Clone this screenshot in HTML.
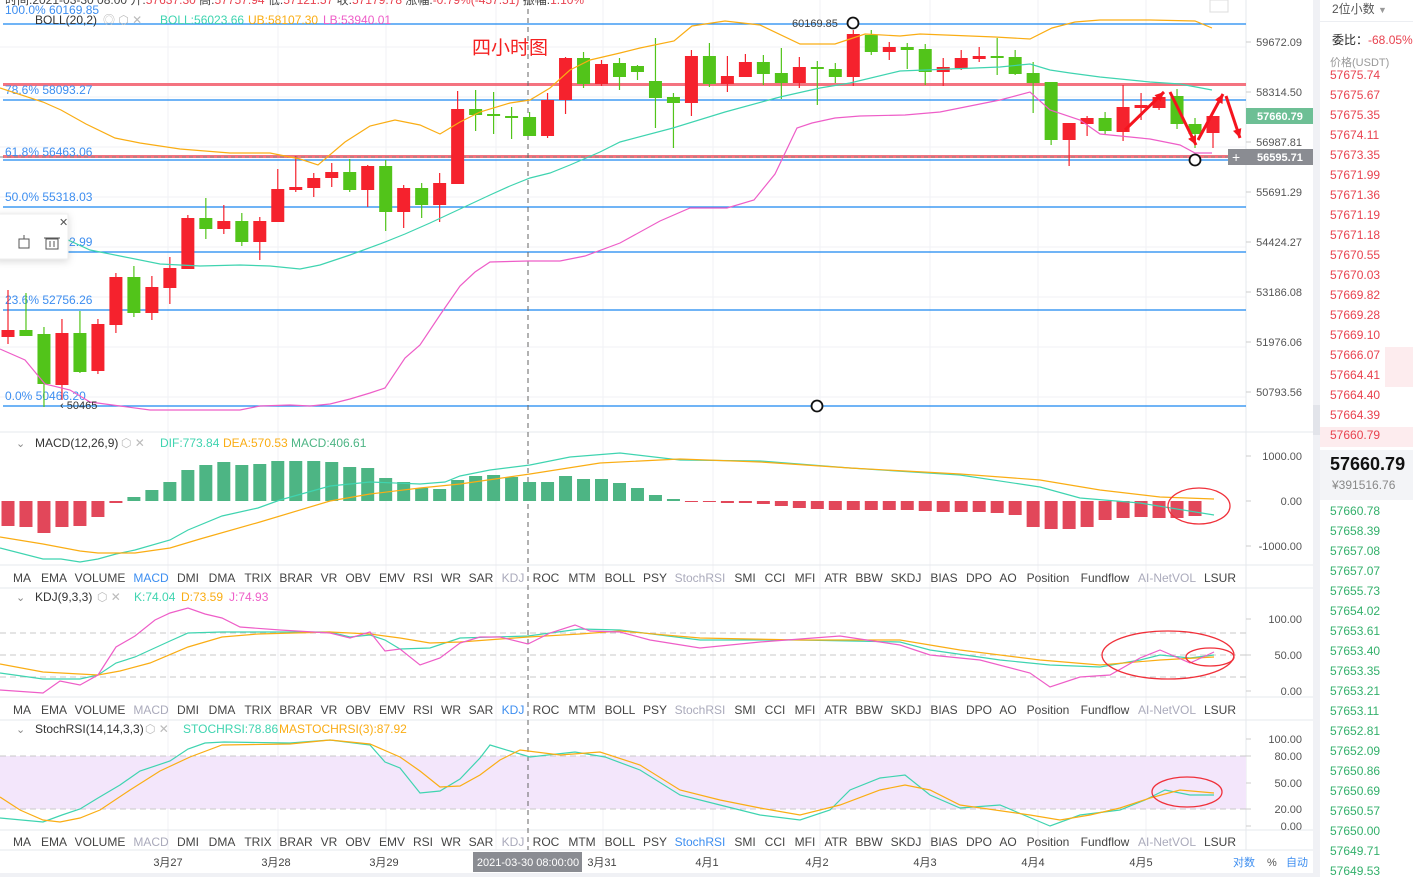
<!DOCTYPE html>
<html><head><meta charset="utf-8">
<style>
*{margin:0;padding:0;box-sizing:border-box}
body{width:1413px;height:877px;overflow:hidden;background:#fff;font-family:"Liberation Sans","Noto Sans CJK SC",sans-serif;position:relative}
#rp{position:absolute;left:1320px;top:0;width:93px;height:877px;background:#fff;font-size:12px}
#rp .r{position:absolute;left:10px;color:#e8424f}
#rp .g{position:absolute;left:10px;color:#33b06b}
#sb{position:absolute;left:1313px;top:0;width:7px;height:877px;background:#f0f1f5}
</style></head><body>
<svg id="c" width="1313" height="877" style="position:absolute;left:0;top:0" font-family="Liberation Sans, Noto Sans CJK SC, sans-serif"></svg>
<div id="sb"><div style="position:absolute;top:405px;left:0;width:7px;height:30px;background:#e2e4ea"></div></div>
<div id="rp">
<div style="position:absolute;left:12px;top:0;color:#555;font-size:12px">2位小数 <span style="color:#999;font-size:9px">▼</span></div>
<div style="position:absolute;left:0;top:21px;width:93px;height:1px;background:#eceef2"></div>
<div style="position:absolute;left:12px;top:31px;font-size:12px;color:#222">委比：<span style="color:#e8424f">-68.05%</span></div>
<div style="position:absolute;left:10px;top:54px;font-size:11px;color:#999">价格(USDT)</div>
<div id="rl"></div>
<div style="position:absolute;left:0;top:450px;width:93px;height:50px;background:#f3f4f7"></div>
<div style="position:absolute;left:10px;top:454px;font-size:18px;font-weight:bold;color:#111">57660.79</div>
<div style="position:absolute;left:12px;top:478px;font-size:12px;color:#888">¥391516.76</div>
</div>
<script>
const S=document.getElementById('c');let h='';
const W=1246;
[47,97,147,197,247,297,347,397].forEach(y=>h+=`<line x1="0" y1="${y}" x2="${W}" y2="${y}" stroke="#f0f2f5"/>`);
[168,278,386,496,603,713,820,930,1038,1146].forEach(x=>h+=`<line x1="${x}" y1="0" x2="${x}" y2="850" stroke="#f0f2f5"/>`);
[432,565,588,697,720,830,850].forEach(y=>h+=`<line x1="0" y1="${y}" x2="1313" y2="${y}" stroke="#e6e8ec"/>`);
h+=`<line x1="1246" y1="0" x2="1246" y2="850" stroke="#e6e8ec"/>`;
h+=`<rect x="0" y="756" width="${W}" height="53" fill="#f3e6fb"/>`;
[633,655,677,756,809].forEach(y=>h+=`<line x1="0" y1="${y}" x2="${W}" y2="${y}" stroke="#c8c8c8" stroke-dasharray="6,4"/>`);
[24,100,160,207,252,310,406].forEach(y=>h+=`<line x1="3" y1="${y}" x2="${W}" y2="${y}" stroke="#1a88f0" stroke-width="1.2"/>`);
[85,157].forEach(y=>h+=`<rect x="3" y="${y-2}" width="${W-3}" height="3" fill="#f25a6a" opacity=".85"/>`);
h+=`<line x1="0" y1="157" x2="${W}" y2="157" stroke="#888" stroke-dasharray="4,3"/>`;
h+=`<line x1="528" y1="0" x2="528" y2="850" stroke="#666" stroke-dasharray="5,4"/>`;
const fl=[[14,'100.0% 60169.85'],[94,'78.6% 58093.27'],[156,'61.8% 56463.06'],[201,'50.0% 55318.03'],[246,'38.2% 53902.99'],[304,'23.6% 52756.26'],[400,'0.0% 50466.20']];
fl.forEach(f=>h+=`<text x="5" y="${f[0]}" font-size="12" fill="#3d8ef0">${f[1]}</text>`);
const C=[[330,337,290,344,'r'],[330,336,293,336,'g'],[334,384,327,407,'g'],[333,385,319,400,'r'],[333,372,311,373,'g'],[324,371,319,374,'r'],[277,325,273,333,'r'],[277,313,266,317,'g'],[287,313,276,320,'r'],[268,288,257,304,'r'],[218,269,215,269,'r'],[218,229,198,239,'g'],[221,229,205,234,'r'],[221,242,213,246,'g'],[221,242,217,260,'r'],[189,222,169,222,'r'],[187,190,156,192,'r'],[178,188,173,197,'r'],[172,178,163,187,'r'],[172,190,159,192,'g'],[166,190,165,207,'r'],[166,212,160,231,'g'],[188,212,185,228,'r'],[188,205,183,218,'g'],[183,205,173,222,'r'],[109,184,91,184,'r'],[109,115,90,131,'g'],[114,116,92,134,'g'],[116,118,107,139,'g'],[117,136,112,136,'g'],[100,136,93,138,'r'],[58,100,57,114,'r'],[58,84,52,88,'g'],[64,84,60,86,'r'],[63,77,58,90,'g'],[66,72,65,80,'g'],[81,98,38,128,'g'],[97,103,93,148,'g'],[56,103,50,116,'r'],[56,84,43,87,'g'],[76,84,56,92,'r'],[62,77,54,77,'r'],[62,74,55,85,'g'],[73,83,48,99,'g'],[67,83,57,88,'r'],[67,69,61,105,'g'],[69,77,63,83,'g'],[34,77,30,86,'r'],[35,52,30,55,'g'],[47,52,42,60,'r'],[47,50,43,69,'g'],[49,72,44,85,'g'],[67,72,58,86,'r'],[58,68,50,70,'r'],[56,59,47,62,'r'],[56,57,38,75,'g'],[57,74,50,75,'g'],[73,83,62,113,'g'],[82,140,82,145,'g'],[123,140,123,166,'r'],[118,124,116,136,'r'],[118,131,112,134,'g'],[107,132,85,141,'r'],[105,108,93,120,'r'],[97,108,94,110,'r'],[96,124,89,129,'g'],[124,134,118,148,'g'],[116,133,116,148,'r']];
const SP=(1213-8)/(C.length-1);
const X=i=>8+i*SP;
C.forEach((c,i)=>{const x=X(i),col=c[4]=='r'?'#f5222d':'#52c41a';
h+=`<line x1="${x}" y1="${c[2]}" x2="${x}" y2="${c[3]}" stroke="${col}" stroke-width="1.2"/><rect x="${x-6.5}" y="${c[0]}" width="13" height="${Math.max(2,c[1]-c[0])}" fill="${col}"/>`});
const pl=(p,col,w)=>h+=`<polyline fill="none" stroke="${col}" stroke-width="${w||1.2}" points="${p.map(q=>q.join(',')).join(' ')}"/>`;
pl([[0,88],[43,102],[61,110],[86,124],[115,138],[140,143],[180,149],[230,153],[270,153],[300,159],[318,165],[345,142],[370,126],[395,120],[420,125],[440,134],[460,122],[480,112],[510,103],[530,100],[550,88],[570,70],[590,60],[620,53],[640,48],[674,41],[692,26],[725,21],[760,25],[800,44],[835,44],[865,34],[900,36],[920,34],[995,37],[1030,39],[1052,28],[1075,22],[1100,20],[1150,20],[1195,21],[1212,28]],'#faad14');
pl([[0,245],[68,240],[90,250],[120,256],[160,264],[200,266],[240,265],[270,266],[300,269],[320,265],[350,255],[380,244],[405,234],[430,223],[460,209],[490,195],[510,186],[530,178],[550,173],[570,165],[600,152],[620,142],[673,128],[725,112],[780,97],[820,88],[850,83],[900,71],[950,69],[1000,67],[1030,64],[1050,70],[1070,73],[1100,77],[1150,82],[1180,84],[1212,90]],'#3fd4b0');
pl([[0,349],[25,360],[45,384],[70,390],[90,402],[120,406],[150,410],[240,410],[260,406],[290,405],[310,406],[330,404],[350,399],[370,393],[385,388],[405,358],[420,345],[440,315],[460,286],[475,272],[490,262],[528,261],[560,261],[585,256],[620,243],[660,221],[690,208],[727,208],[754,200],[775,174],[797,128],[812,123],[835,118],[860,116],[905,115],[940,112],[970,106],[1000,100],[1030,92],[1050,110],[1080,120],[1100,134],[1150,139],[1180,145],[1195,153],[1212,153]],'#ee5ec8');
const ar=(x1,y1,x2,y2)=>{h+=`<line x1="${x1}" y1="${y1}" x2="${x2}" y2="${y2}" stroke="#f5141e" stroke-width="3"/>`;const a=Math.atan2(y2-y1,x2-x1),L=10;
h+=`<polygon fill="#f5141e" points="${x2},${y2} ${x2-L*Math.cos(a-0.45)},${y2-L*Math.sin(a-0.45)} ${x2-L*Math.cos(a+0.45)},${y2-L*Math.sin(a+0.45)}"/>`};
ar(1125,130,1164,92);ar(1170,92,1196,145);ar(1198,140,1223,94);ar(1226,96,1240,138);
[[853,23],[1195,160],[817,406]].forEach(p=>h+=`<circle cx="${p[0]}" cy="${p[1]}" r="5.5" fill="#fff" stroke="#111" stroke-width="1.8"/>`);
h+=`<text x="792" y="27" font-size="11" fill="#444">60169.85</text>`;
h+=`<text x="60" y="409" font-size="11" fill="#333">‹  50465</text>`;
h+=`<text x="472" y="54" font-size="19" fill="#f52020">四小时图</text>`;
h+=`<text x="5" y="4" font-size="12" fill="#444">时间:2021-03-30 08:00 开:<tspan fill="#e8424f">57637.30</tspan> 高:<tspan fill="#e8424f">57757.94</tspan> 低:<tspan fill="#e8424f">57121.57</tspan> 收:<tspan fill="#e8424f">57179.78</tspan> 涨幅:<tspan fill="#e8424f">-0.79%(-457.51)</tspan> 振幅:<tspan fill="#e8424f">1.10%</tspan></text>`;
h+=`<text x="35" y="24" font-size="12" fill="#333">BOLL(20,2)</text><text x="103" y="24" font-size="12" fill="#bbb">◎  ⬡  ✕</text><text x="160" y="24" font-size="12" fill="#3fd4b0">BOLL:56023.66</text><text x="248" y="24" font-size="12" fill="#faad14">UB:58107.30</text><text x="323" y="24" font-size="12" fill="#ee5ec8">LB:53940.01</text>`;
h+=`<rect x="-5" y="214" width="73" height="45" fill="#fff" stroke="#eee" style="filter:drop-shadow(0 2px 4px rgba(0,0,0,.15))"/><text x="59" y="226" font-size="11" fill="#555">✕</text>`;
h+=`<rect x="19" y="239" width="10" height="9" fill="none" stroke="#555"/><line x1="24" y1="235" x2="24" y2="239" stroke="#555"/><rect x="46" y="239" width="12" height="10" fill="none" stroke="#555"/><line x1="44" y1="238" x2="60" y2="238" stroke="#555"/><line x1="50" y1="241" x2="50" y2="247" stroke="#555"/><line x1="54" y1="241" x2="54" y2="247" stroke="#555"/>`;
[[42,'59672.09'],[92,'58314.50'],[142,'56987.81'],[192,'55691.29'],[242,'54424.27'],[292,'53186.08'],[342,'51976.06'],[392,'50793.56'],[456,'1000.00'],[501,'0.00'],[546,'-1000.00'],[619,'100.00'],[655,'50.00'],[691,'0.00'],[739,'100.00'],[756,'80.00'],[783,'50.00'],[809,'20.00'],[826,'0.00']].forEach(p=>h+=`<line x1="1246" y1="${p[0]}" x2="1251" y2="${p[0]}" stroke="#ccc"/><text x="1302" y="${p[0]+4}" font-size="11" fill="#555" text-anchor="end">${p[1]}</text>`);
h+=`<rect x="1246" y="108" width="67" height="16" fill="#6dbf95"/><text x="1257" y="120" font-size="11" fill="#fff" font-weight="bold">57660.79</text>`;
h+=`<rect x="1246" y="149" width="67" height="16" fill="#8a8c92"/><text x="1257" y="161" font-size="11" fill="#fff" font-weight="bold">56595.71</text>`;
h+=`<rect x="1228" y="149" width="18" height="16" fill="#8a8c92"/><text x="1232" y="162" font-size="14" fill="#fff">+</text>`;
h+=`<rect x="1210" y="0" width="18" height="12" fill="#fff" stroke="#ddd"/>`;
const MB=[526,527,533,527,526,517,503,497,490,482,470,465,462,465,464,461,461,461,462,467,468,478,482,488,489,480,476,475,477,482,482,476,479,479,483,488,495,499,501,502,503,503,504,506,508,509,510,510,510,510,510,511,512,512,512,513,515,527,529,529,527,520,518,517,518,518,516];
MB.forEach((v,i)=>{const x=X(i),up=v<501;h+=`<rect x="${x-6.5}" y="${Math.min(v,501)}" width="13" height="${Math.max(1,Math.abs(v-501))}" fill="${up?'#4db584':'#e2475a'}"/>`});
pl([[0,548],[43,559],[61,559],[80,562],[98,559],[116,554],[135,550],[170,540],[188,530],[222,516],[258,508],[280,500],[330,486],[370,482],[420,484],[445,482],[460,476],[490,470],[530,465],[570,457],[620,453],[680,460],[760,461],[850,468],[960,475],[1040,487],[1080,498],[1140,503],[1214,515]],'#3fd4b0');
pl([[0,537],[43,544],[80,551],[98,553],[135,553],[170,548],[200,539],[260,522],[330,501],[370,494],[420,488],[460,484],[530,474],[600,463],[680,459],[760,462],[850,468],[960,474],[1040,480],[1100,490],[1160,497],[1214,499]],'#faad14');
h+=`<ellipse cx="1199" cy="506" rx="31" ry="18" fill="none" stroke="#f0303a" stroke-width="1.3"/>`;
h+=`<text x="16" y="447" font-size="11" fill="#888">⌄</text><text x="35" y="447" font-size="12" fill="#333">MACD(12,26,9)</text><text x="121" y="447" font-size="12" fill="#bbb">⬡  ✕</text><text x="160" y="447" font-size="12" fill="#3fd4b0">DIF:773.84</text><text x="223" y="447" font-size="12" fill="#faad14">DEA:570.53</text><text x="291" y="447" font-size="12" fill="#4db584">MACD:406.61</text>`;
pl([[0,673],[43,679],[80,679],[98,675],[116,663],[135,657],[170,641],[188,633],[222,632],[330,632],[350,637],[370,635],[385,640],[400,649],[430,648],[460,638],[528,636],[580,629],[620,630],[700,640],[800,640],[900,642],[930,650],[1000,660],[1050,665],[1100,667],[1140,660],[1160,655],[1190,658],[1214,655]],'#3fd4b0');
pl([[0,664],[43,672],[98,675],[120,671],[150,663],[188,647],[222,637],[258,634],[330,632],[370,634],[400,638],[430,643],[460,642],[528,637],[580,634],[620,631],[700,638],[800,640],[900,640],[960,650],[1040,660],[1100,665],[1160,660],[1214,657]],'#faad14');
pl([[0,690],[43,693],[60,681],[80,685],[98,675],[116,647],[135,636],[155,620],[170,613],[188,608],[205,614],[222,618],[240,627],[280,630],[330,633],[350,638],[370,632],[385,651],[400,649],[420,665],[440,658],[460,643],[480,637],[500,637],[528,644],[550,633],[575,625],[590,631],[620,632],[650,640],[700,648],[760,642],[840,636],[900,645],[930,655],[980,660],[1030,673],[1050,687],[1080,677],[1110,675],[1140,658],[1160,650],[1190,663],[1214,652]],'#ee5ec8');
h+=`<ellipse cx="1168" cy="655" rx="66" ry="24" fill="none" stroke="#f0303a" stroke-width="1.3"/><ellipse cx="1210" cy="657" rx="24" ry="9" fill="none" stroke="#f0303a" stroke-width="1.3"/>`;
h+=`<text x="16" y="601" font-size="11" fill="#888">⌄</text><text x="35" y="601" font-size="12" fill="#333">KDJ(9,3,3)</text><text x="97" y="601" font-size="12" fill="#bbb">⬡  ✕</text><text x="134" y="601" font-size="12" fill="#3fd4b0">K:74.04</text><text x="181" y="601" font-size="12" fill="#faad14">D:73.59</text><text x="229" y="601" font-size="12" fill="#ee5ec8">J:74.93</text>`;
pl([[0,818],[43,822],[62,815],[80,809],[98,798],[120,785],[140,771],[170,761],[188,749],[205,743],[224,742],[290,743],[330,740],[370,745],[385,762],[400,768],[420,793],[440,791],[460,779],[480,758],[490,745],[530,757],[575,752],[605,757],[640,770],[680,795],[720,805],[760,815],[800,820],[830,810],[850,790],[880,778],[905,775],[930,795],[960,808],[1000,805],[1050,826],[1080,815],[1120,810],[1145,800],[1165,790],[1190,795],[1214,795]],'#3fd4b0');
pl([[0,797],[20,810],[43,820],[60,822],[80,818],[100,810],[130,790],[160,771],[190,757],[222,745],[290,744],[330,740],[370,744],[400,757],[420,771],[440,787],[460,786],[480,775],[500,760],[520,750],[560,755],[600,752],[640,765],[680,790],[720,800],[760,808],[800,815],[840,805],[880,790],[905,785],[930,790],[960,805],[1030,815],[1060,820],[1090,815],[1120,808],[1150,798],[1180,790],[1214,793]],'#faad14');
h+=`<ellipse cx="1187" cy="792" rx="35" ry="15" fill="none" stroke="#f0303a" stroke-width="1.3"/>`;
h+=`<text x="16" y="733" font-size="11" fill="#888">⌄</text><text x="35" y="733" font-size="12" fill="#333">StochRSI(14,14,3,3)</text><text x="145" y="733" font-size="12" fill="#bbb">⬡  ✕</text><text x="183" y="733" font-size="12" fill="#3fd4b0">STOCHRSI:78.86</text><text x="279" y="733" font-size="12" fill="#faad14">MASTOCHRSI(3):87.92</text>`;
const T=[['MA',22],['EMA',54],['VOLUME',100],['MACD',151],['DMI',188],['DMA',222],['TRIX',258],['BRAR',296],['VR',329],['OBV',358],['EMV',392],['RSI',423],['WR',451],['SAR',481],['KDJ',513],['ROC',546],['MTM',582],['BOLL',620],['PSY',655],['StochRSI',700],['SMI',745],['CCI',775],['MFI',805],['ATR',836],['BBW',869],['SKDJ',906],['BIAS',944],['DPO',979],['AO',1008],['Position',1048],['Fundflow',1105],['AI-NetVOL',1167],['LSUR',1220]];
[[582,'MACD'],[714,'KDJ'],[846,'StochRSI']].forEach(r=>T.forEach(t=>{let col='#444';if(t[0]==r[1])col='#3d8ef0';else if(['MACD','KDJ','StochRSI','AI-NetVOL'].includes(t[0]))col='#aab';h+=`<text x="${t[1]}" y="${r[0]}" font-size="12" fill="${col}" text-anchor="middle">${t[0]}</text>`}));
[['3月27',168],['3月28',276],['3月29',384],['3月31',602],['4月1',707],['4月2',817],['4月3',925],['4月4',1033],['4月5',1141]].forEach(d=>h+=`<text x="${d[1]}" y="866" font-size="11" fill="#444" text-anchor="middle">${d[0]}</text>`);
h+=`<rect x="473" y="852" width="109" height="20" fill="#8a8c92"/><text x="528" y="866" font-size="11" fill="#fff" text-anchor="middle">2021-03-30 08:00:00</text>`;
h+=`<text x="1233" y="866" font-size="11" fill="#3d8ef0">对数</text><text x="1267" y="866" font-size="11" fill="#555">%</text><text x="1286" y="866" font-size="11" fill="#3d8ef0">自动</text>`;
h+=`<rect x="0" y="873" width="1313" height="4" fill="#f0f1f5"/>`;
S.innerHTML=h;
const R=['57675.74','57675.67','57675.35','57674.11','57673.35','57671.99','57671.36','57671.19','57671.18','57670.55','57670.03','57669.82','57669.28','57669.10','57666.07','57664.41','57664.40','57664.39','57660.79'];
const G=['57660.78','57658.39','57657.08','57657.07','57655.73','57654.02','57653.61','57653.40','57653.35','57653.21','57653.11','57652.81','57652.09','57650.86','57650.69','57650.57','57650.00','57649.71','57649.53'];
let o='';
R.forEach((v,i)=>{const y=76+i*20;if(i==14||i==15)o+=`<div style="position:absolute;left:65px;top:${y-9}px;width:28px;height:20px;background:#fdecee"></div>`;if(i==18)o+=`<div style="position:absolute;left:0;top:${y-9}px;width:93px;height:20px;background:#fdecee"></div>`;o+=`<div class="r" style="top:${y-8}px">${v}</div>`});
G.forEach((v,i)=>{o+=`<div class="g" style="top:${512+i*20-8}px">${v}</div>`});
document.getElementById('rl').innerHTML=o;
</script>
</body></html>
